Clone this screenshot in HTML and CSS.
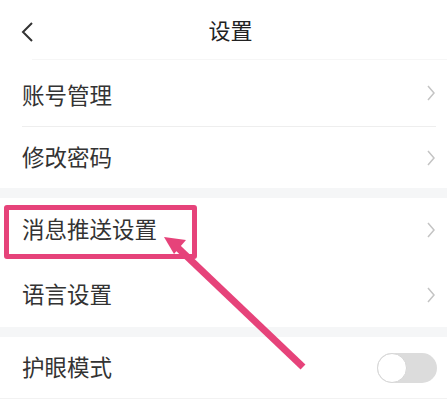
FILE: index.html
```html
<!DOCTYPE html>
<html lang="zh-CN">
<head>
    <meta charset="UTF-8">
    <meta name="viewport" content="width=device-width, initial-scale=1.0">
    <title>设置</title>
    <link rel="stylesheet" href="styles.css">
</head>
<body>
    <div class="page">
        <div class="header">
            <svg class="back" width="14" height="22" viewBox="0 0 14 22">
                <path d="M11 2 L2 11 L11 20" fill="none" stroke="#333" stroke-width="2"/>
            </svg>
            <h1>设置</h1>
        </div>

        <div class="group">
            <div class="row row-first">
                <span>账号管理</span>
                <svg class="arrow" width="10" height="18" viewBox="0 0 10 18"><path d="M2 2 L8 9 L2 16" fill="none" stroke="#c4c4c4" stroke-width="1.5"/></svg>
            </div>
            <div class="row row-second">
                <span>修改密码</span>
                <svg class="arrow" width="10" height="18" viewBox="0 0 10 18"><path d="M2 2 L8 9 L2 16" fill="none" stroke="#c4c4c4" stroke-width="1.5"/></svg>
            </div>
        </div>

        <div class="group">
            <div class="row row-mark">
                <span>消息推送设置</span>
                <svg class="arrow" width="10" height="18" viewBox="0 0 10 18"><path d="M2 2 L8 9 L2 16" fill="none" stroke="#c4c4c4" stroke-width="1.5"/></svg>
                <div class="mark-box"></div>
            </div>
            <div class="row">
                <span>语言设置</span>
                <svg class="arrow" width="10" height="18" viewBox="0 0 10 18"><path d="M2 2 L8 9 L2 16" fill="none" stroke="#c4c4c4" stroke-width="1.5"/></svg>
            </div>
        </div>

        <div class="group">
            <div class="row row-last">
                <span>护眼模式</span>
                <div class="switch"><div class="knob"></div></div>
            </div>
        </div>

        <svg class="pointer" width="447" height="402" viewBox="0 0 447 402">
            <line x1="303" y1="367" x2="178" y2="248" stroke="#e6437a" stroke-width="7"/>
            <polygon points="164,237 186,240 174,254" fill="#e6437a"/>
        </svg>
    </div>
</body>
</html>
```

FILE: styles.css
```css
body {
    margin: 0;
    background-color: #fff;
    font-family: "Noto Sans CJK SC", "Noto Sans", sans-serif;
    color: #333;
}
.page {
    position: relative;
    width: 447px;
    height: 402px;
    overflow: hidden;
}
.header {
    height: 59px;
    display: flex;
    align-items: center;
    justify-content: center;
    position: relative;
    border-bottom: 1px solid #f6f6f6;
    margin-left: 32px;
}
.back {
    position: absolute;
    left: -11px;
    top: 21px;
}
h1 {
    margin: -2px 0 0 -18px;
    font-size: 22px;
    font-weight: normal;
    color: #222;
}
.group {
    border-bottom: 10px solid #f5f6f7;
}
.group:last-of-type {
    border-bottom: none;
}
.row {
    position: relative;
    height: 64px;
    margin-left: 22px;
    padding-right: 11px;
    display: flex;
    align-items: center;
    justify-content: space-between;
    font-size: 22.5px;
}
.row span {
    margin-top: -4px;
}
.row-first {
    height: 66px;
    border-bottom: 1px solid #eeeeee;
    margin-right: 11px;
    padding-right: 0;
}
.row-first span {
    margin-top: 1px;
}
.row + .row {
    height: 65px;
}
.row-first + .row-second {
    height: 61px;
}
.row-last {
    height: 61px;
    border-bottom: 1px solid #f2f2f2;
    margin-left: 0;
    padding-left: 22px;
    padding-right: 10px;
}
.arrow {
    display: block;
}
.mark-box {
    position: absolute;
    left: -18px;
    top: 7px;
    width: 183px;
    height: 44px;
    border: 5px solid #e6437a;
    border-radius: 3px;
}
.switch {
    width: 60px;
    height: 30px;
    border-radius: 15px;
    background-color: #dcdcdc;
    position: relative;
}
.knob {
    position: absolute;
    left: 0;
    top: 0;
    width: 28px;
    height: 28px;
    border-radius: 50%;
    background-color: #fff;
    border: 1px solid #d6d6d6;
}
.pointer {
    position: absolute;
    left: 0;
    top: 0;
}
```
